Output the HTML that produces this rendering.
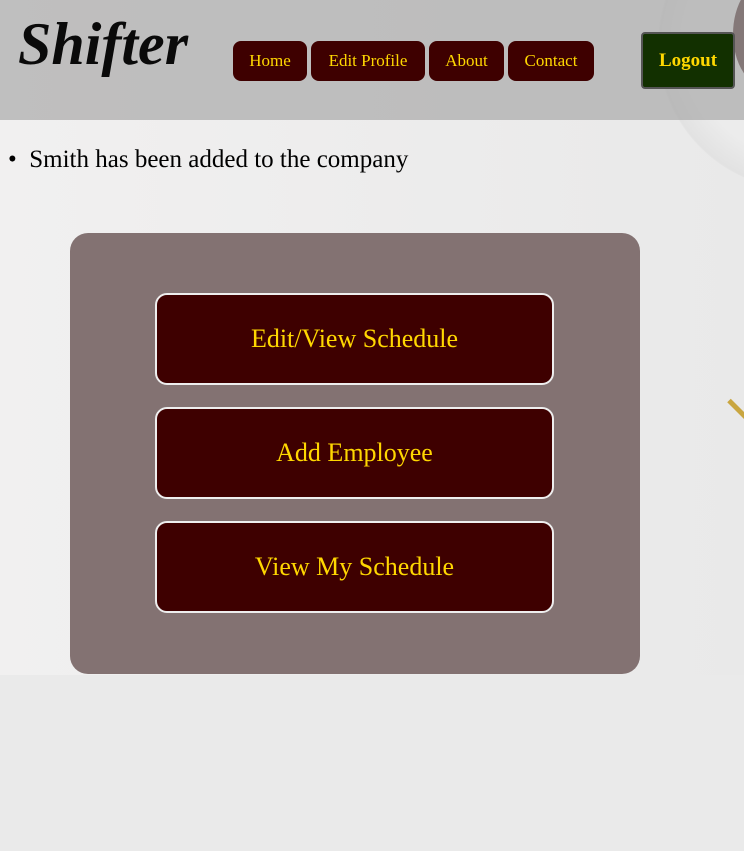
<!DOCTYPE html>
<html><head><meta charset="utf-8">
<style>
html,body{margin:0;padding:0;width:744px;height:851px;background:#eaeaea;overflow:hidden;font-family:"Liberation Serif",serif;}
.bg{position:absolute;left:0;top:0;width:744px;height:675px;background:linear-gradient(90deg,#f1f0f0,#e9e9e9);overflow:hidden;}
.cup{position:absolute;left:658px;top:-100px;width:290px;height:290px;border-radius:50%;background:radial-gradient(circle,#ececec 55%,#e2e2e2 70%,rgba(230,230,230,0) 72%);}
.cup2{position:absolute;left:733px;top:-20px;width:70px;height:108px;border-radius:50%;background:#2e0505;}
.pen{position:absolute;left:729px;top:398px;width:30px;height:5px;background:#c9a640;transform:rotate(45deg);transform-origin:left center;}
.header{position:absolute;left:0;top:0;width:744px;height:120px;background:rgba(170,170,170,0.7);}
.logo{position:absolute;left:18px;top:14px;font-size:60px;font-weight:bold;font-style:italic;color:#0a0a0a;line-height:1;}
.nav{position:absolute;top:41px;height:40px;background:#3e0000;border-radius:8px;color:#ffd700;font-size:17px;line-height:40px;text-align:center;box-sizing:border-box;}
.logout{position:absolute;left:641px;top:32px;width:94px;height:57px;background:#123000;border:2px solid #555;border-radius:4px;box-sizing:border-box;color:#ffd700;font-weight:bold;font-size:19px;line-height:53px;text-align:center;}
.msg{position:absolute;left:8px;top:146px;font-size:25px;color:#000;}
.panel{position:absolute;left:70px;top:233px;width:570px;height:441px;background:#837272;border-radius:18px;}
.btn{position:absolute;left:85px;width:399px;height:92px;background:#3e0000;border:2px solid #eee;border-radius:12px;box-sizing:border-box;color:#ffd700;font-size:26px;line-height:88px;text-align:center;}
</style></head><body>
<div class="bg"><div class="cup"></div><div class="cup2"></div><div class="pen"></div></div>
<div class="header">
<div class="logo">Shifter</div>
<div class="nav" style="left:233px;width:74px">Home</div>
<div class="nav" style="left:311px;width:114px">Edit Profile</div>
<div class="nav" style="left:429px;width:75px">About</div>
<div class="nav" style="left:508px;width:86px">Contact</div>
<div class="logout">Logout</div>
</div>
<div class="msg">&bull;&nbsp; Smith has been added to the company</div>
<div class="panel">
<div class="btn" style="top:60px">Edit/View Schedule</div>
<div class="btn" style="top:174px">Add Employee</div>
<div class="btn" style="top:288px">View My Schedule</div>
</div>
</body></html>
